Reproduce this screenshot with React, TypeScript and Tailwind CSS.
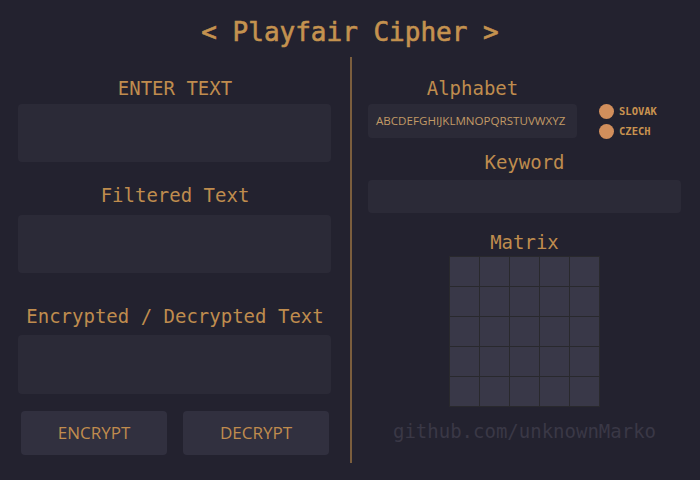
import React from "react";

const mono = { fontFamily: '"DejaVu Sans Mono", "Liberation Mono", monospace' };
const sans = { fontFamily: '"Open Sans", "Noto Sans", sans-serif' };

function Label({ children, className = "" }: { children: React.ReactNode; className?: string }) {
  return (
    <div
      className={`h-[24px] leading-[24px] text-[19px] text-[#bf8c4e] text-center whitespace-nowrap ${className}`}
      style={mono}
    >
      {children}
    </div>
  );
}

export default function App() {
  const cells = Array.from({ length: 25 });
  return (
    <div className="w-[700px] h-[480px] bg-[#23222f] overflow-hidden flex flex-col">
      <div
        className="pt-[16px] h-[48px] leading-[32px] text-[26px] font-normal text-[#c4924f] text-center whitespace-pre [-webkit-text-stroke:0.6px_#c4924f]"
        style={mono}
      >
        {"< Playfair Cipher >"}
      </div>
      <div className="mt-[9px] flex h-[406px]">
        {/* Left column */}
        <div className="w-[350px] flex flex-col">
          <Label className="mt-[19px]">ENTER TEXT</Label>
          <div className="mt-[4px] ml-[18px] w-[313px] h-[58px] rounded-[4px] bg-[#2b2a37]" />
          <Label className="mt-[21px]">Filtered Text</Label>
          <div className="mt-[8px] ml-[18px] w-[313px] h-[58px] rounded-[4px] bg-[#2b2a37]" />
          <Label className="mt-[31px]">Encrypted / Decrypted Text</Label>
          <div className="mt-[7px] ml-[18px] w-[313px] h-[59px] rounded-[4px] bg-[#2b2a37]" />
          <div className="mt-[17px] px-[21px] flex gap-[16px]">
            <button
              className="flex-1 h-[44px] rounded-[4px] bg-[#31303f] text-[17px] text-[#c08c4e] flex items-center justify-center"
              style={sans}
            >
              ENCRYPT
            </button>
            <button
              className="flex-1 h-[44px] rounded-[4px] bg-[#31303f] text-[17px] text-[#c08c4e] flex items-center justify-center"
              style={sans}
            >
              DECRYPT
            </button>
          </div>
        </div>
        {/* Divider */}
        <div className="w-[2px] bg-[#7b5e3d]" />
        {/* Right column */}
        <div className="flex-1 flex flex-col pl-[16px] pr-[19px]">
          <div className="flex items-start">
            <div className="w-[209px] flex flex-col">
              <Label className="mt-[19px]">Alphabet</Label>
              <div
                className="mt-[4px] h-[34px] rounded-[4px] bg-[#2b2a37] flex items-center pl-[8px] text-[11.6px] text-[#c29a66] whitespace-nowrap"
                style={sans}
              >
                ABCDEFGHIJKLMNOPQRSTUVWXYZ
              </div>
            </div>
            <div className="ml-[22px] mt-[47px] flex flex-col gap-[5px]">
              {["SLOVAK", "CZECH"].map((l) => (
                <div key={l} className="flex items-center h-[15px] gap-[5px]">
                  <div className="w-[15px] h-[15px] rounded-full bg-[#d28f5c]" />
                  <span className="text-[10.5px] font-bold text-[#c9924f] leading-none" style={mono}>
                    {l}
                  </span>
                </div>
              ))}
            </div>
          </div>
          <Label className="mt-[11px]">Keyword</Label>
          <div className="mt-[6px] h-[33px] rounded-[4px] bg-[#2b2a37]" />
          <Label className="mt-[17px]">Matrix</Label>
          <div className="mt-[2px] self-center">
            <div className="grid grid-cols-5 gap-[1px] p-[1px] bg-[#29292d] w-[151px] h-[151px]">
              {cells.map((_, i) => (
                <div key={i} className="bg-[#393848]" />
              ))}
            </div>
          </div>
          <div
            className="mt-[12px] h-[24px] leading-[24px] text-[19px] text-[#3a3846] text-center whitespace-nowrap"
            style={mono}
          >
            github.com/unknownMarko
          </div>
        </div>
      </div>
    </div>
  );
}
